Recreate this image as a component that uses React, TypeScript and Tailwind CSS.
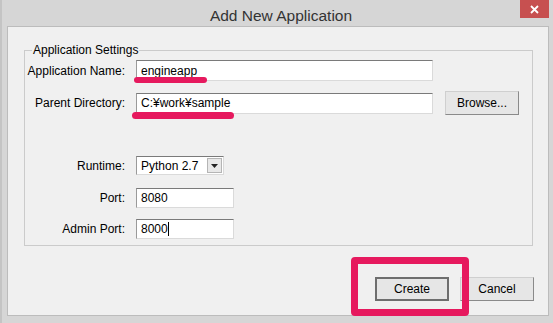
import React from 'react';

const PINK = 'bg-[#e6195e]';

const Field: React.FC<{ value: string; width: string; caret?: boolean }> = ({ value, width, caret }) => (
  <div
    className={`${width} h-[20px] bg-white border border-t-[#7a7a7a] border-l-[#9a9a9a] border-r-[#dadada] border-b-[#dadada] flex items-center pl-[4px] text-[12px] text-black`}
  >
    <span>{value}</span>
    {caret && <span className="w-px h-[14px] bg-black" />}
  </div>
);

const Button: React.FC<{ label: string; primary?: boolean }> = ({ label, primary }) => (
  <button
    className={`w-[74px] h-[24px] bg-[#e6e6e6] text-[12px] text-black flex items-center justify-center ${
      primary
        ? 'border-2 border-[#6e6e6e]'
        : 'border border-t-[#cfcfcf] border-l-[#cfcfcf] border-r-[#8a8a8a] border-b-[#8a8a8a]'
    }`}
  >
    {label}
  </button>
);

const Row: React.FC<{ label: string; className?: string; children: React.ReactNode }> = ({ label, className, children }) => (
  <div className={`flex items-center ${className ?? ''}`}>
    <div className="w-[100px] text-right text-[12px] text-black">{label}</div>
    <div className="ml-[11px] flex items-center">{children}</div>
  </div>
);

export default function App() {
  return (
    <div
      className="w-[553px] h-[323px] bg-[#d6d6d6] border-l-2 border-[#c4c4c4] flex flex-col overflow-hidden"
      style={{ fontFamily: '"Liberation Sans", Arial, sans-serif' }}
    >
      {/* title bar */}
      <div className="h-[26px] flex items-start shrink-0">
        <div className="flex-1 text-center text-[15.5px] text-[#333] pt-[4px] pl-[40px]">Add New Application</div>
        <div className="w-[29px] h-[18px] bg-[#c75050] flex items-center justify-center mr-[4px]">
          <svg width="9" height="9" viewBox="0 0 9 9">
            <path d="M1 1 L8 8 M8 1 L1 8" stroke="white" strokeWidth="1.8" />
          </svg>
        </div>
      </div>

      {/* client area */}
      <div className="ml-[5px] mr-[4px] mb-[7px] flex-1 bg-[#f0f0f0] border border-[#bcbcbc] flex flex-col">
        <div className="relative mt-[23px] ml-[16px] mr-[15px] h-[196px] border border-[#cbcbcb]">
          <span className="absolute -top-[8px] left-[7px] bg-[#f0f0f0] px-[1px] text-[12px] leading-[14px] text-black">
            Application Settings
          </span>

          <div className="flex flex-col pt-[9px]">
            <Row label="Application Name:">
              <div className="relative">
                <div className="w-[297px] h-[21px] bg-white border border-t-[#7a7a7a] border-l-[#9a9a9a] border-r-[#dadada] border-b-[#dadada] flex items-center pl-[4px] text-[12px]">
                  engineapp
                </div>
                <div className={`absolute left-[-2px] top-[17px] w-[73px] h-[6px] rounded-full ${PINK}`} />
              </div>
            </Row>

            <Row label="Parent Directory:" className="mt-[10px]">
              <div className="relative">
                <div className="w-[297px] h-[21px] bg-white border border-t-[#7a7a7a] border-l-[#9a9a9a] border-r-[#dadada] border-b-[#dadada] flex items-center pl-[4px] text-[12px]">
                  C:¥work¥sample
                </div>
                <div className={`absolute left-[-4px] top-[19px] w-[102px] h-[7px] rounded-full ${PINK}`} />
              </div>
              <div className="ml-[12px]">
                <Button label="Browse..." />
              </div>
            </Row>

            <Row label="Runtime:" className="mt-[41px]">
              <div className="w-[88px] h-[19px] bg-white border border-t-[#7a7a7a] border-l-[#9a9a9a] border-r-[#dadada] border-b-[#dadada] flex items-center text-[12px]">
                <span className="flex-1 pl-[4px]">Python 2.7</span>
                <div className="w-[15px] h-[15px] mr-[1px] bg-[#e8e8e8] border border-[#b5b5b5] flex items-center justify-center">
                  <svg width="7" height="4" viewBox="0 0 7 4">
                    <path d="M0 0 H7 L3.5 4 Z" fill="#222" />
                  </svg>
                </div>
              </div>
            </Row>

            <Row label="Port:" className="mt-[13px]">
              <Field value="8080" width="w-[98px]" />
            </Row>

            <Row label="Admin Port:" className="mt-[11px]">
              <Field value="8000" width="w-[98px]" caret />
            </Row>
          </div>
        </div>

        {/* action buttons */}
        <div className="flex justify-end gap-[11px] mt-[31px] mr-[14px]">
          <div className="relative">
            <Button label="Create" primary />
            <div className="absolute left-[-24px] top-[-20px] w-[118px] h-[59px] border-[7px] border-[#e6195e] rounded-[4px]" />
          </div>
          <Button label="Cancel" />
        </div>
      </div>
    </div>
  );
}
